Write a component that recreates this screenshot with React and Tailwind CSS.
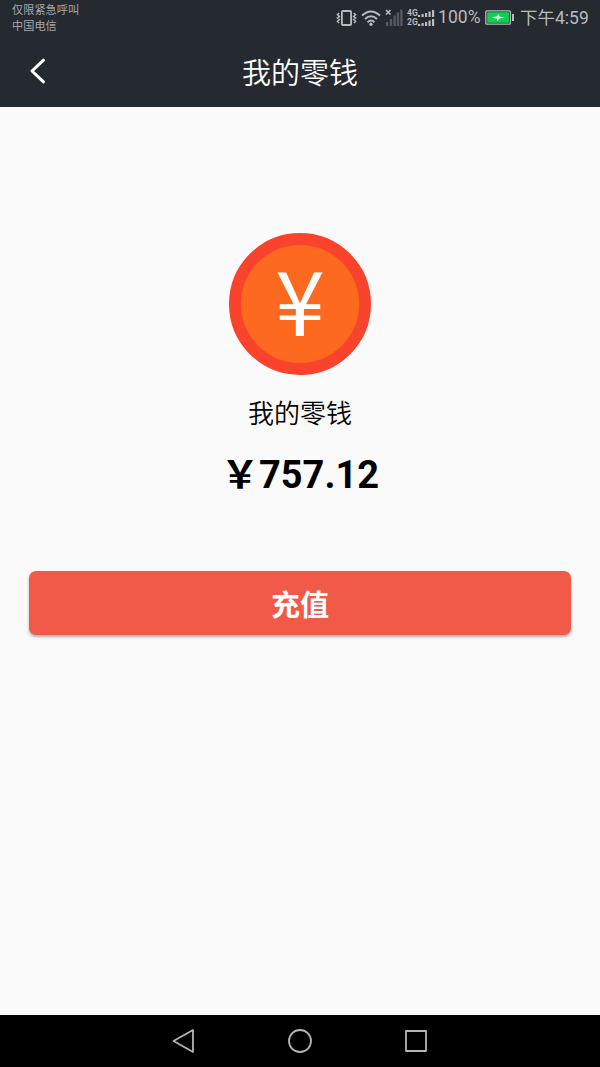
import React from 'react';

const VibrateIcon = () => (
  <svg width="21" height="16" viewBox="0 0 21 16" fill="none" stroke="#b9bbbe" className="shrink-0">
    <rect x="5.9" y="1" width="9.2" height="14" rx="1" strokeWidth="1.8" />
    <path d="M3.2 3 L1.4 4.8 L3.4 6.5 L1.4 8 L3.4 9.5 L1.4 11.2 L3.2 13" strokeWidth="1.5" />
    <path d="M17.8 3 L19.6 4.8 L17.6 6.5 L19.6 8 L17.6 9.5 L19.6 11.2 L17.8 13" strokeWidth="1.5" />
  </svg>
);

const WifiIcon = () => (
  <svg width="20" height="16" viewBox="0 0 20 16" fill="none" stroke="#b9bbbe" strokeWidth="2" className="shrink-0">
    <path d="M1 5.6 Q10 -2.6 19 5.6" />
    <path d="M4 9 Q10 3.4 16 9" />
    <path d="M6.6 12.2 Q10 8.8 13.4 12.2" />
    <circle cx="10" cy="14.2" r="1.7" fill="#b9bbbe" stroke="none" />
  </svg>
);

const NoSignalIcon = () => (
  <svg width="18" height="17" viewBox="0 0 18 17" className="shrink-0">
    <path d="M1 1 L5.5 5.5 M5.5 1 L1 5.5" stroke="#b9bbbe" strokeWidth="1.7" />
    <g fill="#55585e">
      <rect x="1" y="13" width="2.4" height="4" />
      <rect x="4.8" y="10" width="2.4" height="7" />
      <rect x="8.4" y="6.5" width="2.4" height="10.5" />
      <rect x="11.8" y="3.5" width="2.4" height="13.5" />
      <rect x="15.2" y="0.5" width="2.4" height="16.5" />
    </g>
  </svg>
);

const SignalBars = () => (
  <svg width="17" height="7" viewBox="0 0 17 7" fill="#b9bbbe" className="shrink-0">
    <rect x="0" y="5" width="2.2" height="2" />
    <rect x="3.5" y="4" width="2.2" height="3" />
    <rect x="7" y="3" width="2.2" height="4" />
    <rect x="10.5" y="1.5" width="2.2" height="5.5" />
    <rect x="14" y="0" width="2.2" height="7" />
  </svg>
);

const BatteryIcon = () => (
  <svg width="30" height="15" viewBox="0 0 30 15" className="shrink-0">
    <rect x="0.8" y="0.8" width="24.6" height="13.4" rx="1" fill="#252930" stroke="#b9bbbe" strokeWidth="1.3" />
    <rect x="2.2" y="2.2" width="21.8" height="10.6" fill="#12cf52" />
    <path d="M6.5 7.6 L12 6.2 L13.2 3.8 L14.4 6.4 L19.5 7.4 L14.2 8.6 L12.6 11.2 L11.8 8.8 Z" fill="#d9fbe4" />
    <rect x="27" y="4" width="2" height="7" fill="#b9bbbe" />
  </svg>
);

const StatusBar = () => (
  <div className="flex h-9 justify-between pl-3 pr-[11px] text-[#b9bbbe]">
    <div className="pt-[3px] text-[11.2px] leading-4 text-[#a6a8ab]">
      <div>仅限紧急呼叫</div>
      <div>中国电信</div>
    </div>
    <div className="flex h-[35px] items-center">
      <VibrateIcon />
      <div className="ml-[4px] flex"><WifiIcon /></div>
      <div className="ml-[4px] flex"><NoSignalIcon /></div>
      <div className="ml-[4px] flex flex-col gap-[2px] font-['Roboto'] text-[8.5px] font-bold leading-[7px]">
        <div className="flex items-center"><span className="w-[11px]">4G</span><SignalBars /></div>
        <div className="flex items-center"><span className="w-[11px]">2G</span><SignalBars /></div>
      </div>
      <span className="ml-[3px] w-[47px] text-[17.5px] leading-none tracking-[0.1px]">100%</span>
      <BatteryIcon />
      <span className="ml-[5px] w-[69px] whitespace-nowrap pt-[3px] text-[17.5px] leading-none">下午4:59</span>
    </div>
  </div>
);

const Header = () => (
  <header className="h-[107px] bg-[#252930]">
    <StatusBar />
    <div className="grid h-[71px] grid-cols-[60px_1fr_60px] items-center text-white">
      <button className="flex pb-[2px] pl-[29px]">
        <svg width="18" height="26" viewBox="0 0 18 26" fill="none" stroke="currentColor" strokeWidth="3" strokeLinecap="round" strokeLinejoin="round">
          <path d="M14.5 2.2 L3 13 L14.5 23.8" />
        </svg>
      </button>
      <h1 className="pt-[5px] text-center text-[29px] font-[350] leading-none">我的零钱</h1>
    </div>
  </header>
);

const Coin = () => (
  <div className="flex h-[142px] w-[142px] items-center justify-center rounded-full border-[12.5px] border-[#fa432c] bg-[#fd6a1f]">
    <span className="pb-[14px] font-['Noto_Sans_CJK_SC'] text-[89px] leading-none text-white">¥</span>
  </div>
);

const NavBar = () => (
  <nav className="flex h-[52px] items-center justify-center gap-[91px] bg-black">
    <svg width="24" height="26" viewBox="0 0 24 26" fill="none" stroke="#b4b4b4" strokeWidth="1.8" strokeLinejoin="round">
      <path d="M21 2 V24 L1.5 13 Z" />
    </svg>
    <svg width="26" height="26" viewBox="0 0 26 26" fill="none" stroke="#b4b4b4" strokeWidth="1.8">
      <circle cx="13" cy="13" r="11" />
    </svg>
    <svg width="24" height="26" viewBox="0 0 24 26" fill="none" stroke="#b4b4b4" strokeWidth="1.8" strokeLinejoin="round">
      <rect x="2" y="3" width="20" height="20" />
    </svg>
  </nav>
);

const App = () => {
  return (
    <div className="flex h-[1067px] w-[600px] flex-col overflow-hidden bg-[#fafafa] font-['Roboto','Noto_Sans_CJK_SC',sans-serif]">
      <Header />
      <main className="flex flex-1 flex-col items-center px-[29px] pt-[126px]">
        <Coin />
        <p className="mt-[26px] text-[26px] font-[350] leading-[26px] text-black">我的零钱</p>
        <p className="mt-[29px] text-[38px] font-bold leading-[38px] text-black">￥757.12</p>
        <button className="mt-[77px] h-[64px] w-full rounded-[7px] bg-[#f15a48] pt-[7px] text-[29px] font-bold leading-none text-white shadow-[0_2px_3px_rgba(0,0,0,0.3)]">
          充值
        </button>
      </main>
      <NavBar />
    </div>
  );
};

export default App;
